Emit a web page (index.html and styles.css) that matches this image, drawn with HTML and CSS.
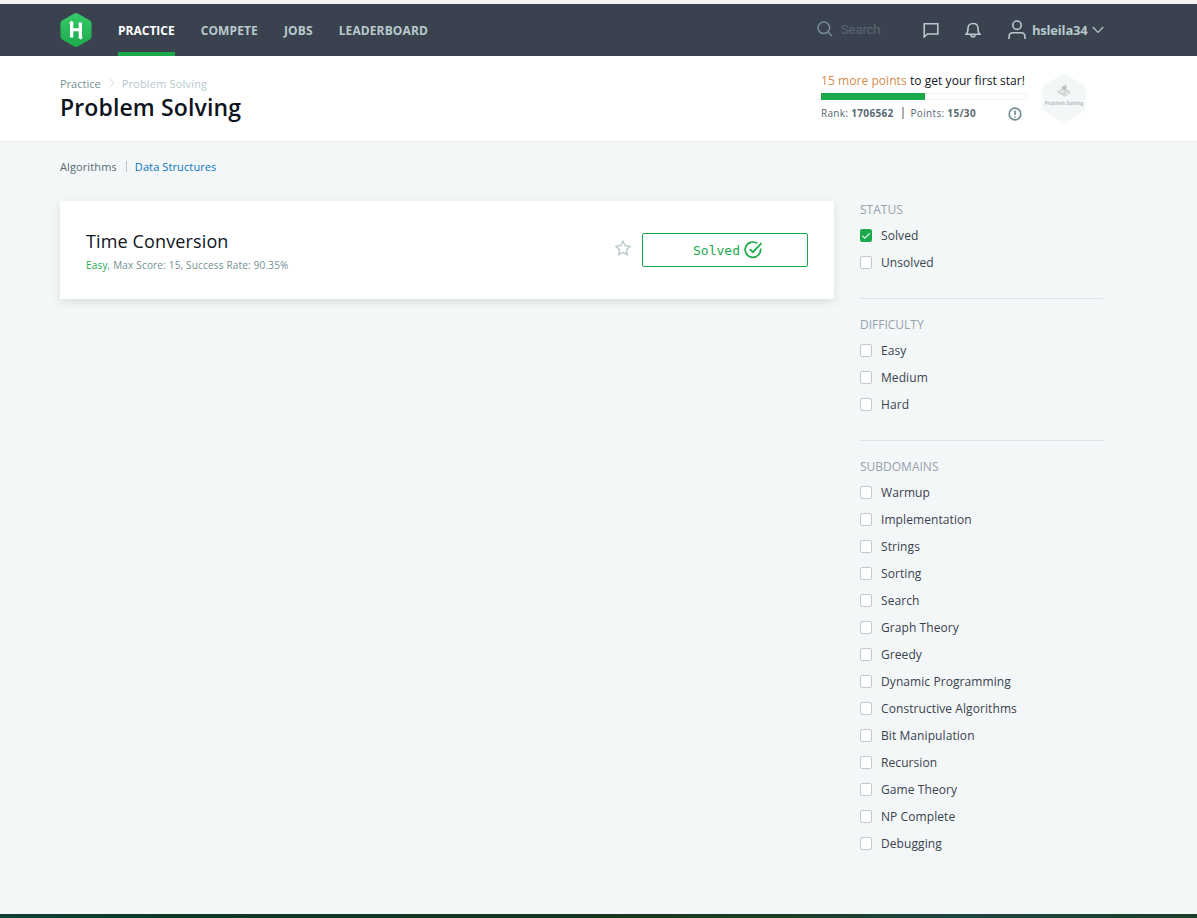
FILE: index.html
```html
<!DOCTYPE html>
<html lang="en">
<head>
<meta charset="utf-8">
<title>Problem Solving</title>
<link rel="stylesheet" href="styles.css">
</head>
<body>
<header class="topbar">
  <svg class="logo" viewBox="0 0 32 34"><defs><linearGradient id="g" x1="0" y1="0" x2="0" y2="1"><stop offset="0" stop-color="#36cb68"/><stop offset="1" stop-color="#1ba94c"/></linearGradient></defs><path fill="url(#g)" d="M14.3.5Q16-.4 17.7.5L29.5 7.2Q31.5 8.3 31.5 10.500V23.500Q31.500 25.700 29.500 26.800L17.700 33.500Q16 34.400 14.300 33.500L2.500 26.800Q.5 25.700 .5 23.500V10.500Q.5 8.300 2.500 7.200Z"/><path fill="#fff" d="M8.900 10.300L11.500 7.500L14.100 10.300H13.300V15.300H18.700V9.500H22V24H23.100L20.500 26.700L17.900 24H18.700V18.300H13.300V24.500H10V10.300Z"/></svg>
  <nav class="menu"><a class="menu-item active">PRACTICE</a><a class="menu-item">COMPETE</a><a class="menu-item">JOBS</a><a class="menu-item">LEADERBOARD</a></nav>
  <div class="search"><svg width="16" height="16" viewBox="0 0 16 16"><circle cx="6.800" cy="6.800" r="5.800"/><path d="M11 11L15 15"/></svg><span>Search</span></div>
  <svg class="chat" viewBox="0 0 16 16"><path d="M1.200 1.800H14.800V12H4.300L1.200 15Z"/></svg>
  <svg class="bell" viewBox="0 0 16 16"><path d="M1 12.300H15C13.200 11 13 9.500 13 6.500C13 3.300 11 1.500 8 1.500S3 3.300 3 6.500C3 9.500 2.800 11 1 12.300ZM6 12.800C6 15.600 10 15.600 10 12.800"/></svg>
  <svg class="user" viewBox="0 0 18 20"><circle cx="9" cy="5.200" r="4.200"/><path d="M1 19V17C1 14.300 2.500 12.800 5 12.800H13C15.500 12.800 17 14.300 17 17V19"/></svg>
  <span class="username">hsleila34</span>
  <svg class="chevron" viewBox="0 0 12 8"><path d="M.7 1L6 6.500L11.300 1"/></svg>
</header>
<section class="page-head">
  <div class="title-block">
    <div class="crumbs"><a>Practice</a><svg width="6" height="10" viewBox="0 0 6 10"><path d="M.7.7L5 5L.7 9.300"/></svg><span>Problem Solving</span></div>
    <h1>Problem Solving</h1>
  </div>
  <div class="progress">
    <div class="goal"><b>15 more points</b> to get your first star!</div>
    <div class="track"><div class="fill"></div></div>
    <div class="rank"><span class="rank-value">Rank: <b>1706562</b></span><i></i><span class="points-value">Points: <b>15/30</b></span><svg class="info" viewBox="0 0 14 14"><circle cx="7" cy="7" r="5.800"/><path d="M7 3.500V7.900M7 9.200V10.600"/></svg></div>
  </div>
  <svg class="badge" viewBox="0 0 44 48"><path fill="#f3f7f7" d="M19.500.8Q22-.5 24.500.8L41 10.300Q43.500 11.700 43.500 14.500V33.500Q43.500 36.300 41 37.700L24.500 47.200Q22 48.500 19.500 47.200L3 37.700Q.5 36.300 .5 33.500V14.500Q.5 11.700 3 10.300Z"/><path fill="#d2d6d7" d="M15.500 17L22 13.500L28.500 17.500V19L22.500 22.800L15.500 18.500Z"/><path fill="#f3f7f7" d="M18 17.300L20 16.200L22.200 17.500L20.200 18.700ZM23 19.500L25 18.300L26.300 19L24.300 20.300Z"/><path fill="#b4b9ba" d="M20 12.500L21.200 12L22 13.300L23 11L24.500 11.800L24 14.500L22.200 15.500L20 14.300Z"/><text x="22" y="31" text-anchor="middle">Problem Solving</text></svg>
</section>
<main class="content">
  <div class="left">
    <nav class="tabs"><a class="current">Algorithms</a><i></i><a>Data Structures</a></nav>
    <article class="card">
      <div class="challenge"><h2>Time Conversion</h2><p><b>Easy</b>, Max Score: 15, Success Rate: 90.35%</p></div>
      <svg class="star" viewBox="0 0 16 16"><path d="M8 1.300L10.100 5.700L15 6.400L11.500 9.800L12.300 14.700L8 12.400L3.700 14.700L4.500 9.800L1 6.400L5.900 5.700Z"/></svg>
      <button class="solved"><span>Solved</span><svg width="19" height="18" viewBox="0 0 19 18"><path d="M13.300 2.400A7.700 7.700 0 1 0 16.500 7.500M5.800 8.200L8.900 11.200L17.500 2.200"/></svg></button>
    </article>
  </div>
  <aside class="filters">
    <section class="group"><h3>STATUS</h3>
      <label><span class="box checked"><svg viewBox="0 0 12 13"><path d="M2.200 6.800L4.800 9.200L9.800 4.300"/></svg></span>Solved</label>
      <label><span class="box"></span>Unsolved</label></section>
    <section class="group"><h3>DIFFICULTY</h3>
      <label><span class="box"></span>Easy</label>
      <label><span class="box"></span>Medium</label>
      <label><span class="box"></span>Hard</label></section>
    <section class="group"><h3>SUBDOMAINS</h3>
      <label><span class="box"></span>Warmup</label>
      <label><span class="box"></span>Implementation</label>
      <label><span class="box"></span>Strings</label>
      <label><span class="box"></span>Sorting</label>
      <label><span class="box"></span>Search</label>
      <label><span class="box"></span>Graph Theory</label>
      <label><span class="box"></span>Greedy</label>
      <label><span class="box"></span>Dynamic Programming</label>
      <label><span class="box"></span>Constructive Algorithms</label>
      <label><span class="box"></span>Bit Manipulation</label>
      <label><span class="box"></span>Recursion</label>
      <label><span class="box"></span>Game Theory</label>
      <label><span class="box"></span>NP Complete</label>
      <label><span class="box"></span>Debugging</label></section>
  </aside>
</main>
<footer class="bottom-edge"></footer>
</body>
</html>
```
FILE: styles.css
```css
* { box-sizing: border-box; }
body { margin: 0; height: 918px; overflow: hidden; display: flex; flex-direction: column; background: #f3f7f7; font-family: "Open Sans", sans-serif; color: #39424e; white-space: nowrap; }
h1, h2, h3, p { margin: 0; }
svg { flex: none; fill: none; }
.topbar { flex: none; height: 56px; padding-left: 60px; border-top: 4px solid #f4f4f4; background: #3b424f; display: flex; align-items: center; }
.logo { width: 32px; height: 34px; }
.menu { display: flex; gap: 26px; margin-left: 26px; height: 52px; width: 699px; }
.menu-item { height: 52px; line-height: 53px; font-size: 12px; font-weight: 700; letter-spacing: .12px; color: #b7c9cc; }
.menu-item.active { color: #fff; border-bottom: 4px solid #1ba94c; letter-spacing: 0; }
.search { display: flex; align-items: center; gap: 8px; width: 106px; color: #576871; font: 13px Roboto, sans-serif; letter-spacing: -.1px; }
.search span { position: relative; top: -1px; }
.search svg { stroke: #738f93; stroke-width: 1.5; position: relative; top: -1px; }
.chat, .bell, .user, .chevron { stroke: #b7c9cc; stroke-width: 1.6; }
.chat { width: 16px; height: 16px; }
.bell { width: 16px; height: 16px; margin-left: 26px; }
.user { width: 18px; height: 20px; margin-left: 27px; }
.username { width: 56px; margin-left: 6px; color: #b7c9cc; font-size: 13px; font-weight: 700; letter-spacing: -.2px; }
.chevron { width: 12px; height: 8px; margin-left: 4px; stroke-width: 1.2; }
.page-head { flex: none; height: 86px; display: flex; padding-left: 60px; background: #fff; border-bottom: 1px solid #e7eeef; }
.title-block { width: 761px; padding-top: 19px; }
.crumbs { display: flex; align-items: center; height: 17px; padding-bottom: 1px; font-size: 11px; color: #b7c9cc; }
.crumbs a { color: #738f93; }
.crumbs svg { margin: 0 7px 0 8px; stroke: #d5dddf; }
.crumbs span { letter-spacing: .18px; }
h1 { color: #0e141e; font-size: 23px; line-height: 30px; font-weight: 600; letter-spacing: .13px; }
.progress { width: 206px; padding-top: 16px; }
.goal { height: 21px; line-height: 18px; font-size: 12px; color: #0e141e; letter-spacing: .06px; }
.goal b { font-weight: 400; color: #d38b4d; }
.track { height: 7px; border: 1px solid #f1f3f3; }
.fill { width: 104px; height: 7px; margin: -1px; background: #1ba94c; }
.rank { height: 26px; display: flex; align-items: center; font-size: 10px; color: #576871; letter-spacing: .32px; }
.rank i { width: 2px; height: 12px; background: #b4aeac; margin: 0 7px 0 8px; }
.info { width: 14px; height: 14px; margin: 2px 5px 0 auto; stroke: #738f93; stroke-width: 1.7; }
.badge { width: 44px; height: 48px; margin: 18px 0 0 15px; }
.badge text { fill: #b9c0c2; font: 700 4.800px "Open Sans", sans-serif; }
.content { flex: 1; min-height: 0; display: flex; gap: 26px; padding-left: 60px; }
.left { width: 774px; padding-top: 16px; }
.tabs { display: flex; align-items: center; height: 16px; color: #0b73bd; font-size: 11px; letter-spacing: .11px; }
.tabs .current { color: #576871; }
.tabs i { width: 1px; height: 11px; margin: 0 8px 0 9px; background: #b7c9cc; }
.card { height: 98px; margin-top: 27px; padding: 0 26px; display: flex; background: #fff; box-shadow: 0 3px 9px rgba(0, 0, 0, .1); }
.challenge { flex: 1; padding-top: 27px; }
h2 { height: 26px; line-height: 27px; font-size: 18px; font-weight: 400; letter-spacing: .13px; color: #0e141e; }
.challenge p { line-height: 22px; font-size: 10px; letter-spacing: .18px; color: #738f93; }
.challenge b { color: #1ba94c; font-weight: 400; }
.star { width: 16px; height: 16px; margin: 39px 11px 0 0; stroke: #b7c9cc; stroke-width: 1.4; }
.solved { width: 166px; height: 34px; margin-top: 32px; padding: 0 0 0 6px; display: flex; justify-content: center; align-items: center; gap: 4px; background: #fff; border: 1px solid #1ba94c; border-radius: 2px; color: #1ba94c; font: 13px "DejaVu Sans Mono", monospace; }
.solved svg { stroke: #1ba94c; stroke-width: 1.7; }
.filters { width: 243px; padding-top: 56px; }
.group { padding-bottom: 22px; margin-bottom: 14px; border-bottom: 1px solid #dde3e5; }
.group:last-child { border: 0; }
h3 { height: 24px; line-height: 24px; font-size: 12px; font-weight: 400; color: #97a1af; }
label { display: flex; align-items: center; gap: 9px; height: 27px; font-size: 12px; letter-spacing: .08px; }
.box { width: 12px; height: 13px; background: #fff; border: 1px solid #c2c7d0; border-radius: 2px; }
.box.checked { background: #1ba94c; border: 0; }
.checked svg { display: block; width: 12px; height: 13px; stroke: #d9f0e1; stroke-width: 1.3; }
.bottom-edge { flex: none; height: 4px; background: linear-gradient(90deg, #103f36, #0b3822 18%, #15351f 50%, #1d3f27 66%, #1b4541 80%, #1b4029); }
```
